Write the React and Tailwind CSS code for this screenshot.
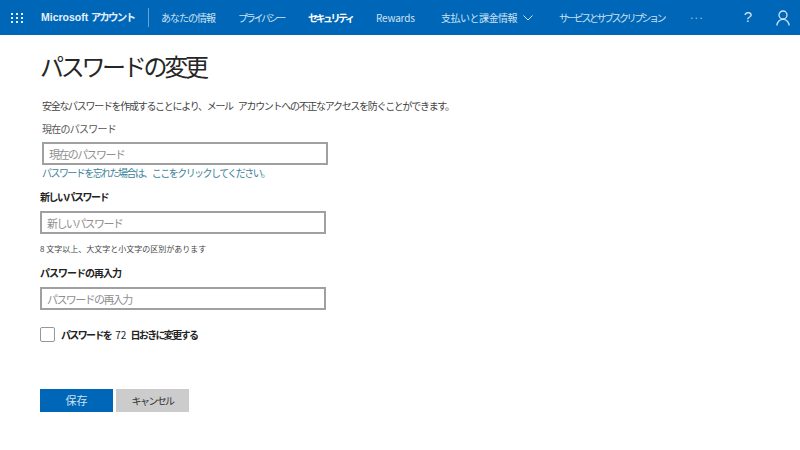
const font = { fontFamily: '"Noto Sans CJK JP", "Noto Sans", sans-serif' };

function Field({ label, indent }) {
  return (
    <input
      placeholder={label}
      className={`block h-[23px] w-[286px] border-2 border-[#a0a0a0] bg-white px-[5px] text-[11px] tracking-[-1.6px] outline-none placeholder:text-[#8f8f8f] ${indent ? "ml-[2px]" : ""}`}
    />
  );
}

export default function App() {
  return (
    <div className="h-[450px] w-[800px] overflow-hidden bg-white text-[#333]" style={font}>
      {/* ヘッダー */}
      <header className="flex h-[35px] items-center bg-[#0067b8] text-[10px] text-[#cfe1f0]">
        <div className="ml-[11px] grid w-[13px] grid-cols-3 gap-[2px]">
          {[...Array(9)].map((_, i) => (
            <span key={i} className="h-[2px] w-[2px] bg-white/90" />
          ))}
        </div>
        <span className="ml-[17px] w-[107px] text-[10.5px] font-bold whitespace-nowrap text-[#e6f0f8]">
          <span style={{ fontFamily: '"Liberation Sans", sans-serif' }}>Microsoft</span>{" "}
          <span className="tracking-[-1.8px]">アカウント</span>
        </span>
        <span className="h-[19px] w-px bg-white/40" />
        <nav className="ml-[12px] flex items-center whitespace-nowrap">
          <a className="w-[77px] tracking-[-1px]">あなたの情報</a>
          <a className="w-[70px] tracking-[-2.3px]">プライバシー</a>
          <a className="w-[68px] font-bold tracking-[-2.5px] text-white">セキュリティ</a>
          <a className="w-[65px] tracking-[-0.2px]">Rewards</a>
          <a className="flex w-[118px] items-center gap-[6px]">
            <span className="tracking-[-0.5px]">支払いと課金情報</span>
            <svg width="10" height="6" viewBox="0 0 10 6" fill="none" stroke="currentColor">
              <path d="M.5.5 5 5 9.500.5" />
            </svg>
          </a>
          <a className="w-[130px] tracking-[-2.5px]">サービスとサブスクリプション</a>
          <span className="tracking-[-1px] text-[#9cc4e3]">···</span>
        </nav>
        <span className="ml-auto text-[15px]" style={{ fontFamily: '"Liberation Sans", sans-serif' }}>?</span>
        <svg className="mr-[10px] ml-[24px]" width="14" height="16" viewBox="0 0 14 16" fill="none" stroke="#cfe1f0" strokeWidth="1.3">
          <circle cx="7" cy="5" r="4" />
          <path d="M.8 15.5C1.5 11.5 4 9.300 7 9.300s5.500 2.200 6.200 6.200" />
        </svg>
      </header>

      <main className="pl-[40px]">
        <h1 className="mt-[13px] text-[24px] leading-[36px] font-normal tracking-[-3.3px] text-[#262626]">パスワードの変更</h1>

        <p className="mt-[15px] ml-[2px] text-[10px] leading-[14px] tracking-[-1.3px] whitespace-nowrap text-[#444] [word-spacing:4px]">
          安全なパスワードを作成することにより、メール アカウントへの不正なアクセスを防ぐことができます。
        </p>

        <label className="mt-[9px] ml-[2px] block text-[10px] leading-[14px] tracking-[-0.75px] text-[#555]">現在のパスワード</label>
        <div className="mt-[6px]">
          <Field label="現在のパスワード" indent />
        </div>
        <a className="ml-[2px] block text-[10px] leading-[15px] tracking-[-1.55px] text-[#3d8299]">パスワードを忘れた場合は、ここをクリックしてください。</a>

        <label className="mt-[10px] block text-[10px] leading-[14px] font-bold tracking-[-1.5px] text-[#222]">新しいパスワード</label>
        <div className="mt-[7px]">
          <Field label="新しいパスワード" />
        </div>
        <p className="mt-[9px] text-[8px] leading-[12px] text-[#444]">8 文字以上、大文字と小文字の区別があります</p>

        <label className="mt-[11px] block text-[10px] leading-[14px] font-bold tracking-[-1px] text-[#222]">パスワードの再入力</label>
        <div className="mt-[7px]">
          <Field label="パスワードの再入力" />
        </div>

        <label className="mt-[17px] flex items-center gap-[6px]">
          <span className="h-[15px] w-[15px] rounded-[2px] border border-[#979797] bg-white" />
          <span className="text-[10px] leading-[15px] font-bold tracking-[-1.65px] text-[#222] [word-spacing:3.5px]">
            パスワードを <span className="font-normal tracking-normal">72</span> 日おきに変更する
          </span>
        </label>

        <div className="mt-[47px] flex gap-[3px]">
          <button className="h-[23px] w-[73px] bg-[#0067b8] text-[11px] text-[#cfe2f1]">保存</button>
          <button className="h-[23px] w-[73px] bg-[#cccccc] text-[10px] tracking-[-1.6px] text-[#333]">キャンセル</button>
        </div>
      </main>
    </div>
  );
}
